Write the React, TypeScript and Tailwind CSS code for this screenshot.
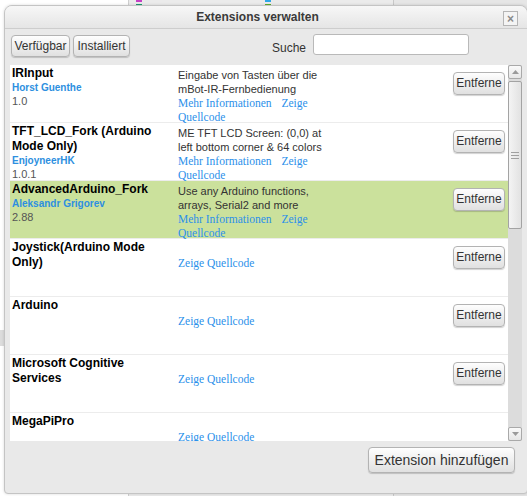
import React from 'react';

type Ext = {
  name: string;
  author?: string;
  version?: string;
  desc?: string;
  info?: boolean;
  remove?: boolean;
  active?: boolean;
};

const EXTENSIONS: Ext[] = [
  { name: 'IRInput', author: 'Horst Guenthe', version: '1.0', desc: 'Eingabe von Tasten über die mBot-IR-Fernbedienung', info: true, remove: true },
  { name: 'TFT_LCD_Fork (Arduino Mode Only)', author: 'EnjoyneerHK', version: '1.0.1', desc: 'ME TFT LCD Screen: (0,0) at left bottom corner & 64 colors', info: true, remove: true },
  { name: 'AdvancedArduino_Fork', author: 'Aleksandr Grigorev', version: '2.88', desc: 'Use any Arduino functions, arrays, Serial2 and more', info: true, remove: true, active: true },
  { name: 'Joystick(Arduino Mode Only)', remove: true },
  { name: 'Arduino', remove: true },
  { name: 'Microsoft Cognitive Services', remove: true },
  { name: 'MegaPiPro' },
];

const btn =
  'rounded-[4px] border border-[#b3b3b3] bg-gradient-to-b from-[#fefefe] to-[#e0e0e0] text-[#333] shadow-[0_1px_1px_rgba(0,0,0,0.18)] leading-none';

function Row({ ext }: { ext: Ext }) {
  return (
    <div className={`flex h-[58px] shrink-0 border-b border-[#ececec] ${ext.active ? 'bg-[#cbe19c]' : 'bg-white'}`}>
      <div className="w-[162px] shrink-0 pl-[2px] pt-[1px]">
        <div className="text-[12px] font-bold leading-[15px] text-black">{ext.name}</div>
        {ext.author && <div className="text-[10px] font-bold leading-[13px] text-[#2d8fe0]">{ext.author}</div>}
        {ext.version && <div className="text-[11px] leading-[14px] text-[#555]">{ext.version}</div>}
      </div>
      <div className="ml-[6px] w-[150px] shrink-0 pt-[2.5px]">
        <div className="text-[11px] leading-[14px] text-[#333]">{ext.desc ?? '\u00a0'}</div>
        <div className="font-['Liberation_Serif',serif] text-[11.5px] leading-[14px] text-[#2b90ea]">
          {ext.info && <span className="mr-[7px]">Mehr Informationen</span>} <span>Zeige</span> <span>Quellcode</span>
        </div>
      </div>
      <div className="flex-1" />
      <div className="pr-[3px] pt-[5px]">
        {ext.remove && <button className={`${btn} h-[23px] w-[52px] text-[12px]`}>Entferne</button>}
      </div>
    </div>
  );
}

function Scrollbar() {
  return (
    <div className="flex w-[14px] shrink-0 flex-col bg-[#dcdcdc]">
      <div className="flex h-[14px] items-center justify-center rounded-[2px] border border-[#a9a9a9] bg-gradient-to-b from-[#fafafa] to-[#e6e6e6]">
        <svg width="7" height="4" viewBox="0 0 7 4"><path d="M0 4 L3.5 0 L7 4 Z" fill="#9a9a9a" /></svg>
      </div>
      <div className="mt-[2px] flex h-[148px] flex-col items-center justify-center gap-[2px] rounded-[2px] border border-[#a3a3a3] bg-gradient-to-r from-[#f4f4f4] to-[#e2e2e2]">
        <div className="h-px w-[8px] bg-[#a0a0a0]" />
        <div className="h-px w-[8px] bg-[#a0a0a0]" />
        <div className="h-px w-[8px] bg-[#a0a0a0]" />
      </div>
      <div className="flex-1" />
      <div className="flex h-[14px] items-center justify-center rounded-[2px] border border-[#a9a9a9] bg-gradient-to-b from-[#fafafa] to-[#e6e6e6]">
        <svg width="7" height="4" viewBox="0 0 7 4"><path d="M0 0 L3.5 4 L7 0 Z" fill="#9a9a9a" /></svg>
      </div>
    </div>
  );
}

export default function App() {
  return (
    <div className="relative h-[496px] w-[527px] overflow-hidden bg-white font-['Liberation_Sans',Arial,sans-serif]">
      {/* page behind the dialog */}
      <div className="flex h-full">
        <div className="w-[128px] shrink-0 bg-white">
          <div className="mt-[330px] h-[16px] w-[4px] bg-[#dcdcdc]" />
        </div>
        <div className="relative w-[265px] shrink-0 border-l border-[#cfcfcf] bg-[#ebebeb]">
          <div className="absolute left-[7px] top-0 h-[2px] w-[6px] bg-[#c43fc4]" />
          <div className="absolute left-[7px] top-[4px] h-[2px] w-[6px] bg-[#1e9a70]" />
          <div className="absolute left-[136px] top-0 h-[2px] w-[6px] bg-[#2ea6e8]" />
          <div className="absolute left-[136px] top-[4px] h-[2px] w-[6px] bg-[#5fae2a]" />
        </div>
        <div className="flex-1 border-l border-[#c8c8c8] bg-[#e6e6e6]" />
      </div>

      {/* dialog window */}
      <div className="absolute left-[4px] top-[5px] flex h-[489px] w-[524px] flex-col overflow-hidden rounded-t-[8px] rounded-b-[4px] border border-[#c4c4c4] bg-[#e9e9e9] shadow-[0_0_3px_rgba(0,0,0,0.15)]">
        <div className="relative flex h-[23px] shrink-0 items-center justify-center border-b border-[#cdcdcd] bg-gradient-to-b from-[#f7f7f7] to-[#e5e5e5] pr-[17px]">
          <span className="text-[12px] font-bold text-[#3a3a3a]">Extensions verwalten</span>
          <div className="absolute right-[9px] top-[5px] flex h-[15px] w-[15px] items-center justify-center border border-[#b5b5b5] bg-[#f4f4f4] text-[12px] font-bold leading-none text-[#8a8a8a]">
            ×
          </div>
        </div>

        <div className="flex h-[35px] shrink-0 items-start pl-[6px] pt-[6px]">
          <button className={`${btn} h-[22px] w-[59px] text-[12px]`}>Verfügbar</button>
          <button className={`${btn} ml-[3px] h-[22px] w-[57px] text-[12px]`}>Installiert</button>
          <span className="ml-[142px] mt-[4px] text-[12px] text-[#333]">Suche</span>
          <div className="ml-[7px] mt-[-1px] h-[21px] w-[156px] rounded-[3px] border border-[#b9b9b9] bg-white" />
        </div>

        <div className="ml-[5px] mr-[5px] mt-[1px] flex h-[376px] shrink-0 bg-white">
          <div className="flex flex-1 flex-col overflow-hidden">
            {EXTENSIONS.map((e) => (
              <Row key={e.name} ext={e} />
            ))}
          </div>
          <Scrollbar />
        </div>

        <div className="flex flex-1 justify-end pr-[12px] pt-[6px]">
          <button className={`${btn} h-[26px] w-[147px] text-[14px]`}>Extension hinzufügen</button>
        </div>
      </div>
    </div>
  );
}
